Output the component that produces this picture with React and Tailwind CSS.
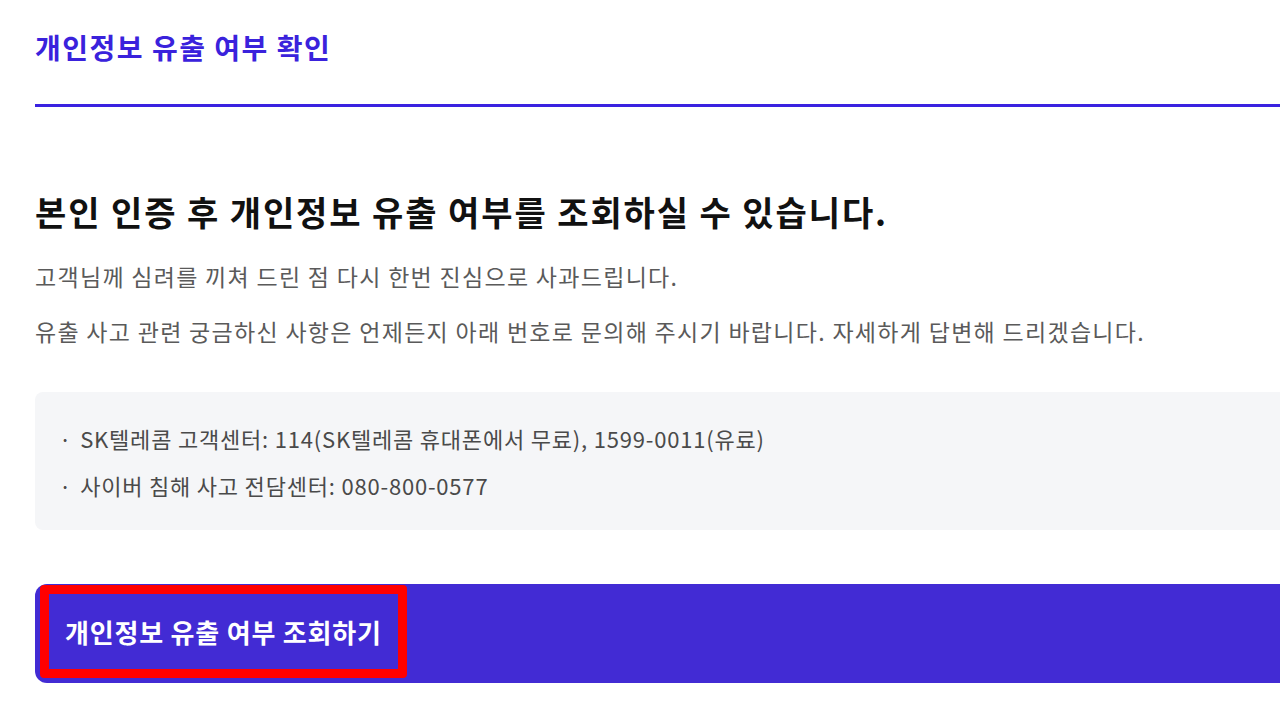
import React from 'react';

const font = { fontFamily: '"Noto Sans CJK KR", "Noto Sans", sans-serif' };

export default function App() {
  return (
    <div className="w-[1280px] h-[720px] overflow-hidden bg-white" style={font}>
      <div className="w-[1300px] pl-[35px]">
        {/* Page title */}
        <h1 className="pt-[28px] h-[104px] text-[28px] font-bold text-[#3a22dc] tracking-[1.5px] leading-[38px]">
          개인정보 유출 여부 확인
        </h1>
        <div className="h-[3px] bg-[#3a22e0]" />

        {/* Intro */}
        <h2 className="mt-[81px] text-[34px] font-bold text-[#111] tracking-[1.9px] leading-[48px]">
          본인 인증 후 개인정보 유출 여부를 조회하실 수 있습니다.
        </h2>
        <p className="mt-[24px] text-[23px] text-[#5a5a5a] tracking-[1.3px] leading-[32px]">
          고객님께 심려를 끼쳐 드린 점 다시 한번 진심으로 사과드립니다.
        </p>
        <p className="mt-[23px] text-[23px] text-[#5a5a5a] tracking-[1.3px] leading-[32px]">
          유출 사고 관련 궁금하신 사항은 언제든지 아래 번호로 문의해 주시기 바랍니다. 자세하게 답변해 드리겠습니다.
        </p>

        {/* Contact box */}
        <div className="mt-[45px] h-[138px] rounded-lg bg-[#f5f6f8] pl-[24px] pt-[30px] flex flex-col gap-[15px] text-[22px] text-[#4a4a4a] tracking-[0.8px] leading-[32px]">
          <div className="flex gap-[8px]">
            <span>·</span>
            <span>SK텔레콤 고객센터: 114(SK텔레콤 휴대폰에서 무료), 1599-0011(유료)</span>
          </div>
          <div className="flex gap-[8px]">
            <span>·</span>
            <span>사이버 침해 사고 전담센터: 080-800-0577</span>
          </div>
        </div>

        {/* Action button */}
        <div className="mt-[54px] h-[99px] rounded-xl bg-[#422bd4] flex items-start pt-[1px] pl-[5px]">
          <div className="h-[93px] border-[9px] border-[#ff0000] rounded-sm flex items-center pl-[16px] pr-[16px]">
            <span className="text-[26px] font-bold text-white tracking-[0.8px]">개인정보 유출 여부 조회하기</span>
          </div>
        </div>
      </div>
    </div>
  );
}
